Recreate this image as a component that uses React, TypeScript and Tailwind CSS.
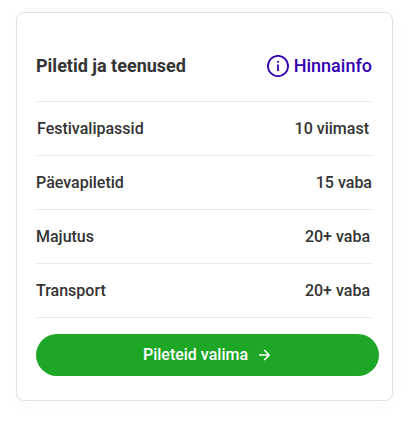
import clsx from "clsx";

interface Service {
    name: string;
    availability: string;
    nameClass?: string;
    availabilityClass?: string;
}

const services: Service[] = [
    {name: "Festivalipassid", availability: "10 viimast", nameClass: "pl-px", availabilityClass: "pr-1"},
    {name: "Päevapiletid", availability: "15 vaba", availabilityClass: "pr-px"},
    {name: "Majutus", availability: "20+ vaba", availabilityClass: "pr-[3px]"},
    {name: "Transport", availability: "20+ vaba", availabilityClass: "pr-[3px]"},
];

function InfoIcon() {
    return (
        <svg width="22" height="22" viewBox="0 0 22 22" fill="none" aria-hidden="true">
            <circle cx="11" cy="11" r="10.1" stroke="currentColor" strokeWidth="1.9" />
            <path d="M11 9.5v6.5M11 6v1.8" stroke="currentColor" strokeWidth="1.8" />
        </svg>
    );
}

function ArrowIcon() {
    return (
        <svg width="11" height="12" viewBox="0 0 11 12" fill="none" aria-hidden="true">
            <path d="M0 6h10M5.2 1l5 5-5 5" stroke="currentColor" strokeWidth="1.6" />
        </svg>
    );
}

export default function App() {
    return (
        <main className="min-h-screen bg-white px-4 pt-3 font-['Roboto',sans-serif] text-[#333333]">
            <section className="h-[389px] w-[377px] rounded-lg border border-[#dfe1e8] bg-white px-[19px] shadow-[0_4px_20px_rgba(30,30,90,0.02)]">
                <header className="flex h-[89px] items-center justify-between border-b border-[#ececee] pt-[18px]">
                    <h2 className="text-lg font-bold">Piletid ja teenused</h2>
                    <a href="#" className="flex items-center gap-[5px] pr-px text-lg font-medium text-[#3300b0]">
                        <InfoIcon />
                        Hinnainfo
                    </a>
                </header>

                <ul>
                    {services.map((service) => (
                        <li
                            key={service.name}
                            className="flex h-[54px] items-center justify-between border-b border-[#ececee] text-base font-medium"
                        >
                            <span className={clsx(service.nameClass)}>{service.name}</span>
                            <span className={clsx(service.availabilityClass)}>{service.availability}</span>
                        </li>
                    ))}
                </ul>

                <button
                    type="button"
                    className="mt-4 flex h-[42px] w-[343px] items-center justify-center gap-[11px] rounded-full bg-[#1ea727] pr-0.5 text-base font-medium text-white"
                >
                    Pileteid valima
                    <ArrowIcon />
                </button>
            </section>
        </main>
    );
}
